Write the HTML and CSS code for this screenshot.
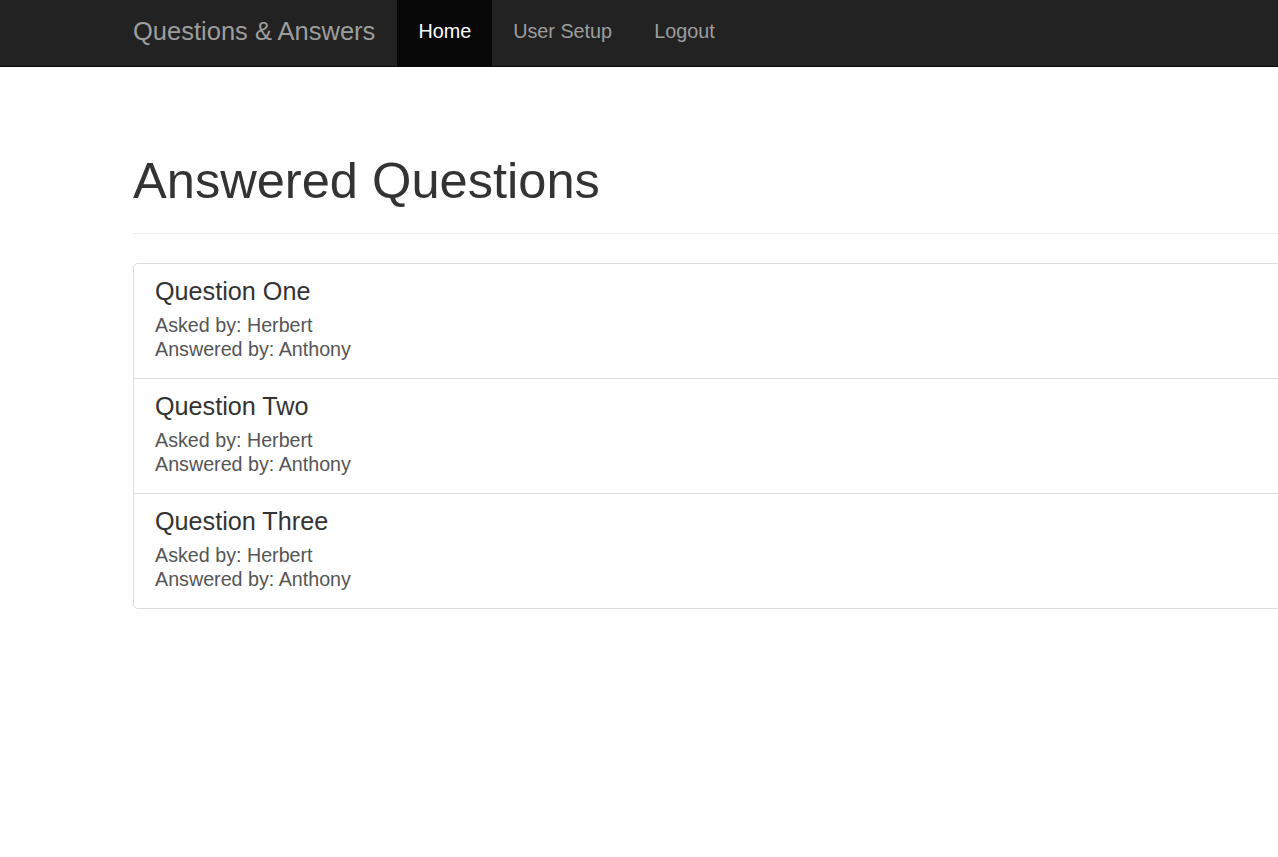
FILE: index.html
```html
<!DOCTYPE html>
<html lang="en">
<head>
<meta charset="utf-8">
<title>Questions &amp; Answers</title>
<link rel="stylesheet" href="styles.css">
</head>
<body>
<nav class="navbar">
  <div class="navbar-inner">
    <a class="brand" href="#">Questions &amp; Answers</a>
    <ul class="nav">
      <li><a class="nav-link active" href="#">Home</a></li>
      <li><a class="nav-link" href="#">User Setup</a></li>
      <li><a class="nav-link" href="#">Logout</a></li>
    </ul>
  </div>
</nav>
<main class="container">
  <div class="page-header">
    <h1>Answered Questions</h1>
  </div>
  <div class="list-group">
    <a class="list-item" href="#">
      <h4 class="item-heading">Question One</h4>
      <p class="item-text">Asked by: Herbert<br>Answered by: Anthony</p>
    </a>
    <a class="list-item" href="#">
      <h4 class="item-heading">Question Two</h4>
      <p class="item-text">Asked by: Herbert<br>Answered by: Anthony</p>
    </a>
    <a class="list-item" href="#">
      <h4 class="item-heading">Question Three</h4>
      <p class="item-text">Asked by: Herbert<br>Answered by: Anthony</p>
    </a>
  </div>
</main>
</body>
</html>
```

FILE: styles.css
```css
* { box-sizing: border-box; }
html, body {
  margin: 0;
  padding: 0;
  overflow: hidden;
  background: #fff;
}
body {
  font-family: "Liberation Sans", Arial, Helvetica, sans-serif;
  font-size: 19.7px;
  color: #333;
}
a { text-decoration: none; }

.navbar {
  background: #222;
  border-bottom: 1px solid #080808;
  height: 67px;
}
.navbar-inner {
  display: flex;
  align-items: stretch;
  height: 66px;
  padding-left: 133px;
}
.brand {
  display: block;
  margin-left: -20px;
  padding: 18px 22px 0 20px;
  font-size: 25.5px;
  line-height: 26px;
  color: #9d9d9d;
}
.nav {
  display: flex;
  list-style: none;
  margin: 0;
  padding: 0;
}
.nav li { display: flex; }
.nav-link {
  display: block;
  padding: 18px 21px 22px 21px;
  font-size: 19.8px;
  line-height: 26px;
  color: #9d9d9d;
}
.nav-link.active {
  background: #080808;
  color: #fff;
}

.container {
  padding-left: 133px;
  margin-right: -20px;
}
.page-header {
  margin-top: 86px;
  border-bottom: 1px solid #eee;
  padding-bottom: 25px;
}
.page-header h1 {
  margin: 0;
  font-size: 50.6px;
  line-height: 55px;
  font-weight: 500;
  color: #333;
}
.list-group {
  margin-top: 29px;
  border: 1px solid #ddd;
  border-radius: 5px;
}
.list-item {
  display: block;
  padding: 14px 21px 17px 21px;
  border-top: 1px solid #ddd;
  color: #555;
}
.list-item:first-child { border-top: none; }
.item-heading {
  margin: 0 0 8px 0;
  font-size: 25.2px;
  line-height: 27px;
  font-weight: 500;
  color: #333;
}
.item-text {
  margin: 0;
  font-size: 19.7px;
  line-height: 24px;
  color: #555;
}
```
